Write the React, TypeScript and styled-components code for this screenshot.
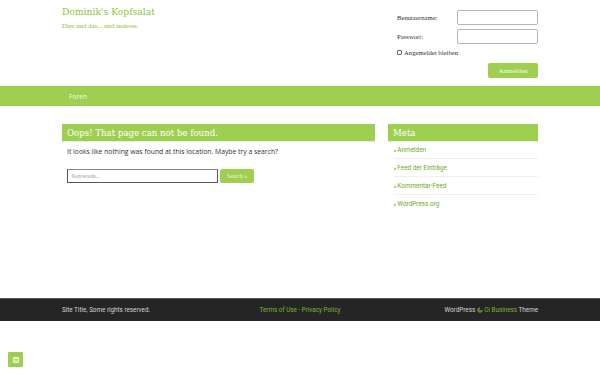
import React from "react";
import styled, { createGlobalStyle } from "styled-components";

const GREEN = "#9fcf50";
const TITLE_GREEN = "#8cc43e";

const GlobalStyle = createGlobalStyle`
  html, body {
    margin: 0;
    padding: 0;
    background: #ffffff;
    font-family: "Open Sans", "Liberation Sans", sans-serif;
  }
`;

const Page = styled.div`
  width: 600px;
  height: 375px;
  position: relative;
  overflow: hidden;
  background: #fff;
`;

const Container = styled.div`
  width: 476px;
  margin: 0 auto;
`;

const Header = styled(Container)`
  height: 86px;
  display: flex;
  justify-content: space-between;
  box-sizing: border-box;
  padding-top: 5px;
`;

const Brand = styled.div`
  display: flex;
  flex-direction: column;
`;

const SiteTitle = styled.div`
  font-family: "DejaVu Serif", "Liberation Serif", serif;
  font-size: 9.2px;
  color: ${TITLE_GREEN};
  line-height: 14px;
`;

const Tagline = styled.div`
  font-family: "Liberation Serif", serif;
  font-size: 6.8px;
  color: ${TITLE_GREEN};
  margin-top: 3px;
`;

const LoginForm = styled.form`
  width: 141px;
  display: flex;
  flex-direction: column;
  padding-top: 5px;
`;

const FieldRow = styled.label`
  display: flex;
  align-items: center;
  justify-content: space-between;
  height: 15px;
  margin-bottom: 4px;
`;

const Label = styled.span`
  font-family: "Liberation Serif", serif;
  font-size: 6.7px;
  color: #333;
`;

const TextInput = styled.input`
  width: 81px;
  height: 15px;
  box-sizing: border-box;
  border: 1px solid #b5b5b5;
  border-radius: 2px;
  padding: 0 3px;
  font-size: 6px;
  outline: none;
`;

const Remember = styled.label`
  display: flex;
  align-items: center;
  gap: 1px;
  font-family: "Liberation Serif", serif;
  font-size: 6.7px;
  color: #333;
  margin-top: 1px;
`;

const Check = styled.input`
  appearance: none;
  width: 5px;
  height: 5px;
  margin: 0 1px 0 0;
  border: 1px solid #666;
  border-radius: 1px;
  background: #fff;
`;

const ButtonRow = styled.div`
  display: flex;
  justify-content: flex-end;
  margin-top: 7px;
`;

const LoginButton = styled.button`
  width: 50px;
  height: 15px;
  border: none;
  border-radius: 2px;
  background: ${GREEN};
  color: #f4fbe9;
  font-family: "Liberation Serif", serif;
  font-size: 7px;
  padding: 0;
`;

const NavBar = styled.nav`
  height: 20px;
  background: ${GREEN};
`;

const NavInner = styled(Container)`
  height: 100%;
  display: flex;
  align-items: center;
  padding-left: 7px;
  box-sizing: border-box;
`;

const NavItem = styled.a`
  font-family: "Open Sans", sans-serif;
  font-size: 6.7px;
  color: #f3fae6;
  text-decoration: none;
`;

const Main = styled(Container)`
  display: flex;
  justify-content: space-between;
  padding-top: 18px;
  height: 192px;
  box-sizing: border-box;
`;

const Content = styled.section`
  width: 313px;
`;

const Sidebar = styled.aside`
  width: 150px;
`;

const BoxTitle = styled.h1`
  margin: 0;
  height: 17px;
  background: ${GREEN};
  color: #ffffff;
  font-family: "DejaVu Serif", serif;
  font-weight: normal;
  font-size: 8.6px;
  display: flex;
  align-items: center;
  padding-left: 5px;
  box-shadow: 0 1px 1px rgba(0, 0, 0, 0.08);
`;

const Lead = styled.p`
  margin: 6px 0 0 5px;
  font-family: "Open Sans", sans-serif;
  font-size: 6.8px;
  color: #333;
`;

const SearchRow = styled.form`
  display: flex;
  align-items: center;
  gap: 2px;
  margin: 13px 0 0 5px;
`;

const SearchInput = styled.input`
  width: 151px;
  height: 14px;
  box-sizing: border-box;
  border: 1px solid #555;
  border-top-color: #888;
  padding: 0 4px;
  font-family: "Liberation Serif", serif;
  font-size: 5.8px;
  outline: none;
  &::placeholder {
    color: #999;
  }
`;

const SearchButton = styled.button`
  width: 34px;
  height: 14px;
  border: none;
  border-radius: 2px;
  background: ${GREEN};
  color: #eef8dd;
  font-family: "Liberation Serif", serif;
  font-size: 5.8px;
  padding: 0;
`;

const MetaList = styled.ul`
  list-style: none;
  margin: 0;
  padding: 0 0 0 6px;
`;

const MetaItem = styled.li`
  height: 17px;
  display: flex;
  align-items: center;
  border-bottom: 1px solid #f0f0f0;
  font-family: Roboto, "Open Sans", sans-serif;
  font-size: 6.4px;
  color: #6fa92b;
  gap: 2px;
  &:last-child {
    border-bottom: none;
  }
`;

const Arrow = styled.span`
  font-size: 5.5px;
  font-weight: bold;
  color: #5f9a22;
  letter-spacing: -1.5px;
  margin-right: 1px;
`;

const Footer = styled.footer`
  height: 22px;
  background: #252525;
  border-top: 1px solid #555;
`;

const FooterInner = styled(Container)`
  height: 100%;
  display: grid;
  grid-template-columns: 1fr auto 1fr;
  align-items: center;
  font-family: Roboto, "Open Sans", sans-serif;
  font-size: 6.3px;
  color: #d6d6d6;
`;

const FooterRight = styled.span`
  justify-self: end;
  display: flex;
  align-items: center;
  gap: 1.5px;
`;

const GreenText = styled.span`
  color: #7cb534;
`;

const MenuToggle = styled.button`
  position: absolute;
  left: 8px;
  top: 352px;
  width: 15px;
  height: 15px;
  padding: 0;
  border: none;
  border-radius: 1px;
  background: ${GREEN};
  display: flex;
  align-items: center;
  justify-content: center;
`;

const metaLinks = ["Anmelden", "Feed der Einträge", "Kommentar-Feed", "WordPress.org"];

export default function App() {
  return (
    <Page>
      <GlobalStyle />
      <Header>
        <Brand>
          <SiteTitle>Dominik's Kopfsalat</SiteTitle>
          <Tagline>Dies und das... und anderes.</Tagline>
        </Brand>
        <LoginForm onSubmit={(e) => e.preventDefault()}>
          <FieldRow>
            <Label>Benutzername:</Label>
            <TextInput type="text" />
          </FieldRow>
          <FieldRow>
            <Label>Passwort:</Label>
            <TextInput type="password" />
          </FieldRow>
          <Remember>
            <Check type="checkbox" />
            Angemeldet bleiben
          </Remember>
          <ButtonRow>
            <LoginButton type="submit">Anmelden</LoginButton>
          </ButtonRow>
        </LoginForm>
      </Header>
      <NavBar>
        <NavInner>
          <NavItem href="#">Foren</NavItem>
        </NavInner>
      </NavBar>
      <Main>
        <Content>
          <BoxTitle>Oops! That page can not be found.</BoxTitle>
          <Lead>It looks like nothing was found at this location. Maybe try a search?</Lead>
          <SearchRow onSubmit={(e) => e.preventDefault()}>
            <SearchInput placeholder="Keywords..." />
            <SearchButton type="submit">Search »</SearchButton>
          </SearchRow>
        </Content>
        <Sidebar>
          <BoxTitle>Meta</BoxTitle>
          <MetaList>
            {metaLinks.map((l) => (
              <MetaItem key={l}>
                <Arrow>››</Arrow>
                {l}
              </MetaItem>
            ))}
          </MetaList>
        </Sidebar>
      </Main>
      <Footer>
        <FooterInner>
          <span>Site Title, Some rights reserved.</span>
          <GreenText>Terms of Use - Privacy Policy</GreenText>
          <FooterRight>
            WordPress
            <svg width="6" height="6" viewBox="0 0 12 12">
              <path d="M6 1.5 A4.5 4.5 0 1 0 10.5 6" fill="none" stroke="#7cb534" strokeWidth="1.8" />
              <path d="M6 3.5 A2.5 2.5 0 1 0 8.5 6" fill="none" stroke="#7cb534" strokeWidth="1.5" />
            </svg>
            <GreenText>Oi Business</GreenText> Theme
          </FooterRight>
        </FooterInner>
      </Footer>
      <MenuToggle aria-label="menu">
        <svg width="6" height="6" viewBox="0 0 6 6">
          <rect x="0" y="0" width="6" height="6" fill="#e9f5d6" />
          <rect x="1" y="2" width="4" height="0.8" fill={GREEN} />
          <rect x="1" y="3.6" width="4" height="0.8" fill={GREEN} />
        </svg>
      </MenuToggle>
    </Page>
  );
}
